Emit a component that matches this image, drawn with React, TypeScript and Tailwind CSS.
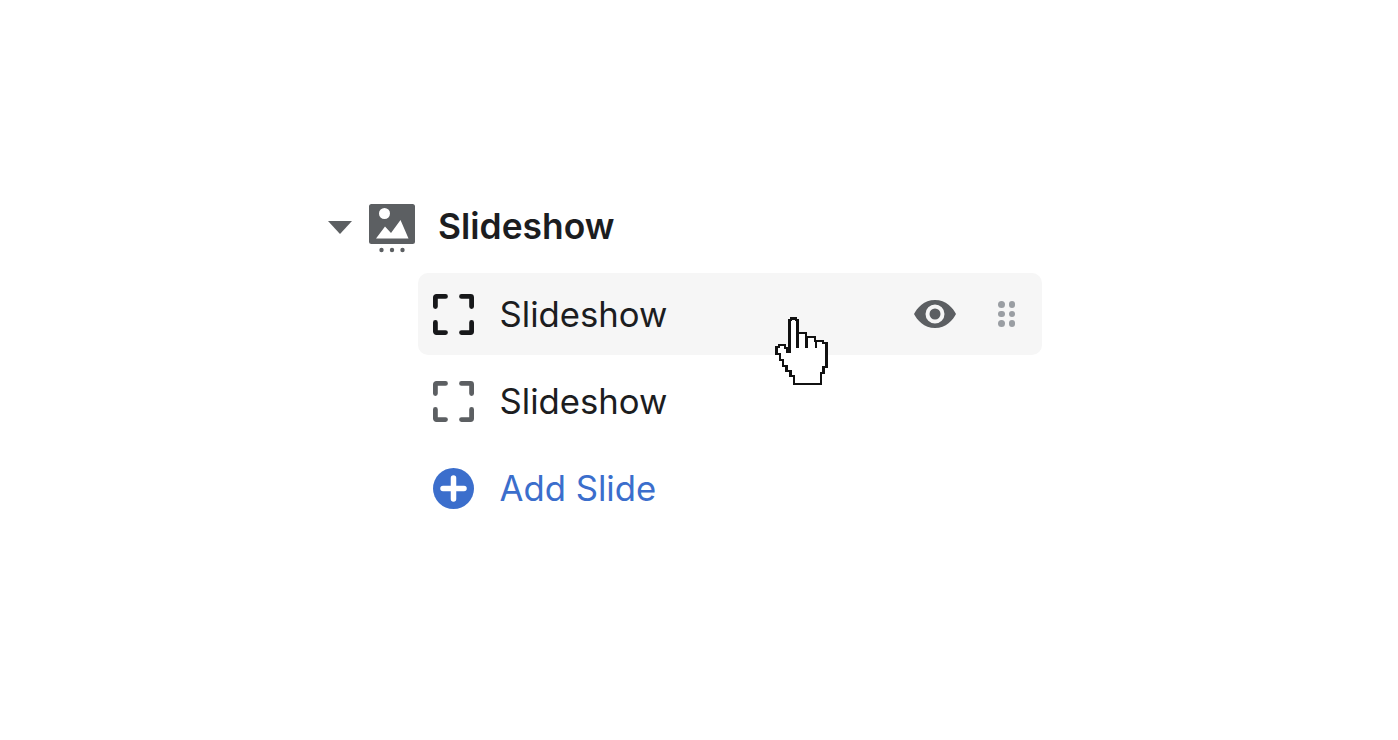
import React from "react";

const FrameIcon = ({ className }: { className: string }) => (
  <svg viewBox="0 0 41 41" className={`h-[41px] w-[41px] shrink-0 ${className}`} fill="none" stroke="currentColor" strokeWidth="4.800" strokeLinecap="round" strokeLinejoin="round">
    <path d="M2.400 12.500V3.400a1 1 0 0 1 1-1h9.100" />
    <path d="M28.500 2.400H37.600a1 1 0 0 1 1 1v9.100" />
    <path d="M38.600 28.500V37.600a1 1 0 0 1-1 1h-9.100" />
    <path d="M12.500 38.600H3.400a1 1 0 0 1-1-1v-9.100" />
  </svg>
);

const SlideshowIcon = () => (
  <svg viewBox="0 0 46 50" className="h-[50px] w-[46px] shrink-0">
    <path fill="#5c5f62" d="M2.500 0h41A2.500 2.500 0 0 1 46 2.500v35a2.500 2.500 0 0 1-2.500 2.500h-41A2.500 2.500 0 0 1 0 37.500v-35A2.500 2.500 0 0 1 2.500 0z" />
    <circle cx="15.500" cy="9.500" r="5.500" fill="#fff" />
    <path fill="#fff" d="M7 34.500 16 22.500l6 6.500 9.500-13L39.500 34.500z" />
    <circle cx="12.500" cy="46" r="2.200" fill="#5c5f62" />
    <circle cx="23" cy="46" r="2.200" fill="#5c5f62" />
    <circle cx="33.500" cy="46" r="2.200" fill="#5c5f62" />
  </svg>
);

const HandCursor = () => (
  <svg viewBox="0 0 54 70" shapeRendering="crispEdges" className="absolute left-[357px] top-[43px] h-[70px] w-[54px]">
    <path
      fill="#fff"
      stroke="#111"
      strokeWidth="2.500"
      d="M16 2.500H21V4H22.500V17H31V21H40V25H48V27H51.500V51H48.500V57H46V68H19V60H15.500V55H11.500V50H8V44H5V38H1.500V31H4V29H10V32H12.500V36H14.500V4H16z"
    />
    <path fill="none" stroke="#111" strokeWidth="2.500" d="M22.500 17V32M31.500 21V32M41 25V32" />
  </svg>
);

export default function App() {
  return (
    <div className="h-[740px] w-full bg-white pl-[328px] pt-[200px] font-['Inter','Liberation_Sans',sans-serif] text-[#1c1d1f]">
      <div className="flex h-[54px] items-start">
        <div className="mt-[21px] h-0 w-0 border-x-[12.500px] border-t-[13px] border-x-transparent border-t-[#5c5f62]" />
        <div className="ml-[16px] mt-[4px] pl-px">
          <SlideshowIcon />
        </div>
        <span className="ml-[23px] mt-[4px] text-[35.400px] font-semibold leading-[46px]">Slideshow</span>
      </div>

      <div className="ml-[90px] mt-[19px] flex w-[624px] flex-col gap-[5px]">
        <div className="relative flex h-[82px] items-center rounded-[10px] bg-[#f6f6f6] pl-[15px] pr-[27px]">
          <FrameIcon className="text-[#17181a]" />
          <span className="ml-[25.500px] text-[34.700px] leading-none">Slideshow</span>
          <div className="ml-auto flex items-center gap-[42px]">
            <svg viewBox="0 0 42 28" className="h-[28px] w-[42px]">
              <path fill="#5c5f62" fillRule="evenodd" d="M21 0C32 0 39 8 42 14 39 20 32 28 21 28S3 20 0 14C3 8 10 0 21 0zm0 4.500a9.500 9.500 0 1 0 0 19 9.500 9.500 0 0 0 0-19z" />
              <circle cx="21" cy="14" r="5.500" fill="#5c5f62" />
            </svg>
            <div className="grid grid-cols-2 gap-x-[4px] gap-y-[3px]">
              {[0, 1, 2, 3, 4, 5].map((i) => (
                <span key={i} className="h-[6.500px] w-[6.500px] rounded-full bg-[#9a9ea3]" />
              ))}
            </div>
          </div>
          <HandCursor />
        </div>

        <div className="flex h-[82px] items-center pl-[15px]">
          <FrameIcon className="text-[#5c5f62]" />
          <span className="ml-[25.500px] text-[34.700px] leading-none">Slideshow</span>
        </div>

        <div className="flex h-[82px] items-center pl-[15px] text-[#3b6ecc]">
          <svg viewBox="0 0 41 41" className="h-[41px] w-[41px] shrink-0">
            <circle cx="20.500" cy="20.500" r="20.500" fill="currentColor" />
            <path stroke="#fff" strokeWidth="5.500" strokeLinecap="round" d="M20.500 10v21M10 20.500h21" />
          </svg>
          <span className="ml-[25.500px] text-[34.700px] leading-none">Add Slide</span>
        </div>
      </div>
    </div>
  );
}
